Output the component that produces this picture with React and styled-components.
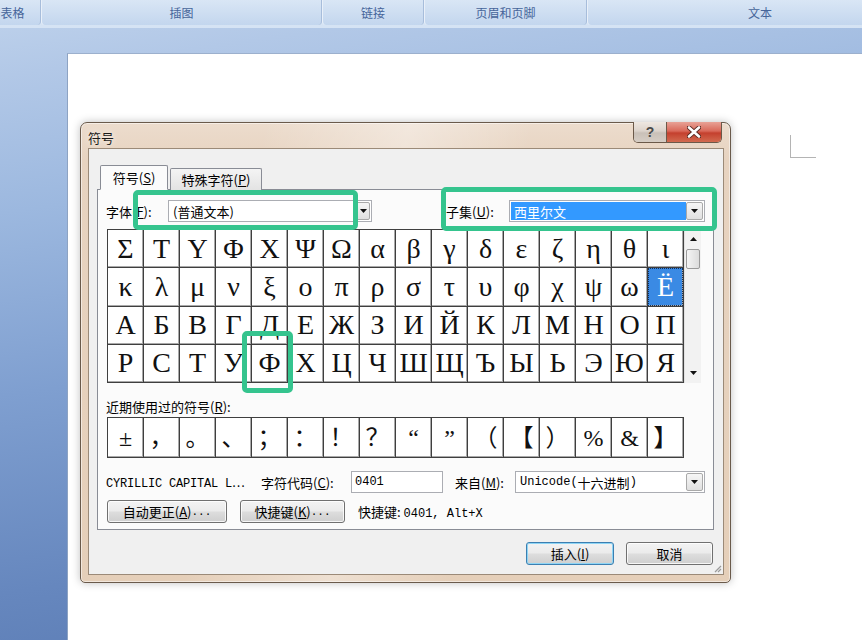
import React from 'react';
import styled, { createGlobalStyle } from 'styled-components';

const CJK = `"Noto Sans CJK SC", "Liberation Sans", sans-serif`;
const MONO = `"Liberation Mono", "Noto Sans CJK SC", monospace`;

const GlobalStyle = createGlobalStyle`
  html, body { margin: 0; padding: 0; }
  body {
    width: 862px;
    height: 640px;
    overflow: hidden;
    font-family: ${CJK};
    font-size: 13px;
    color: #000;
  }
  * { box-sizing: border-box; }
`;

// 배경 / 리본
const Screen = styled.div`
  width: 862px;
  height: 640px;
  display: flex;
  flex-direction: column;
  overflow: hidden;
  background: linear-gradient(172deg, #c0d3ec 0%, #b2c8e7 10%, #9cb8df 28%, #7f9fd0 52%, #6687be 78%, #5677b0 100%);
`;

const Ribbon = styled.div`
  height: 28px;
  flex: none;
  display: flex;
  background: #d5e3f4;
  padding-bottom: 3px;
`;

const Group = styled.div`
  flex: none;
  width: ${p => p.w}px;
  margin-left: ${p => p.ml || 0}px;
  display: flex;
  align-items: center;
  justify-content: center;
  background: linear-gradient(#d9e6f5, #c3d6ee);
  border-right: 1px solid #a7bddb;
  border-left: 1px solid #e9f0f9;
  border-radius: 0 0 4px 4px;
  color: #46659a;
  font-size: 12px;
`;

const Workspace = styled.div`
  flex: 1;
  display: flex;
  padding: 25px 0 0 67px;
`;

const Page = styled.div`
  flex: 1;
  position: relative;
  background: #fff;
  border-left: 1px solid #8da3c3;
  border-top: 1px solid #9cb0cd;
  padding: 68px 0 0 12px;
`;

const CornerMark = styled.div`
  position: absolute;
  left: 722px;
  top: 81px;
  width: 26px;
  height: 23px;
  border-left: 1px solid #b4b4b4;
  border-bottom: 1px solid #b4b4b4;
`;

// 대화상자
const Dialog = styled.div`
  position: relative;
  width: 651px;
  height: 461px;
  display: flex;
  flex-direction: column;
  padding: 0 6px 7px 7px;
  border: 1px solid #6a5a4b;
  border-radius: 7px 7px 5px 5px;
  background:
    linear-gradient(100deg, rgba(255,255,255,0) 25%, rgba(255,255,255,0.35) 45%, rgba(255,255,255,0) 62%),
    linear-gradient(180deg, #ecdccd 0%, #e7d3c0 8%, #e5cfb9 100%);
  box-shadow: 0 0 8px rgba(0,0,0,0.25), inset 0 0 0 1px rgba(255,255,255,0.5);
`;

const TitleBar = styled.div`
  height: 25px;
  flex: none;
  display: flex;
  justify-content: space-between;
  align-items: flex-start;
`;

const Title = styled.div`
  margin-top: 7px;
  line-height: 16px;
  font-size: 13px;
  color: #1a1a1a;
  text-shadow: 0 0 6px rgba(255,255,255,0.9);
`;

const CaptionButtons = styled.div`
  display: flex;
  margin: -1px 2px 0 0;
  border: 1px solid #6b5949;
  border-top: none;
  border-radius: 0 0 5px 5px;
  overflow: hidden;
`;

const CaptionButton = styled.div`
  width: ${p => p.w}px;
  height: 20px;
  display: flex;
  align-items: center;
  justify-content: center;
  background: ${p => p.close
    ? 'linear-gradient(#e8a296 0%, #d9695a 45%, #c4402e 55%, #d26a4f 100%)'
    : 'linear-gradient(#eee7e1 0%, #dcd3cb 45%, #c9c0b8 55%, #d6cdc4 100%)'};
  border-left: ${p => p.close ? '1px solid #6b5949' : 'none'};
  color: #4a4a4a;
  font-family: "Liberation Sans", sans-serif;
  font-size: 14px;
  font-weight: bold;
`;

const Client = styled.div`
  flex: 1;
  position: relative;
  display: flex;
  flex-direction: column;
  background: #f0f0f0;
  border: 1px solid #9b8a78;
  padding: 16px 9px 0 8px;
`;

const TabStrip = styled.div`
  display: flex;
  align-items: flex-end;
  height: 25px;
  padding-left: 3px;
  margin-bottom: -1px;
`;

const Tab = styled.div`
  position: relative;
  z-index: ${p => p.active ? 1 : 0};
  height: ${p => p.active ? 25 : 22}px;
  width: ${p => p.w}px;
  margin-left: ${p => p.ml || 0}px;
  display: flex;
  align-items: center;
  justify-content: center;
  border: 1px solid #898c95;
  border-bottom: ${p => p.active ? '1px solid #fbfbfb' : 'none'};
  border-radius: 2px 2px 0 0;
  background: ${p => p.active ? '#fbfbfb' : 'linear-gradient(#f4f4f4, #e3e3e3)'};
  font-size: 13px;
`;

const Key = styled.span`
  text-decoration: underline;
`;

const Panel = styled.div`
  width: 617px;
  height: 341px;
  flex: none;
  border: 1px solid #898c95;
  background: #fbfbfb;
  padding: 0 0 0 8px;
  display: flex;
  flex-direction: column;
`;

const Row = styled.div`
  display: flex;
  align-items: center;
  height: ${p => p.h || 22}px;
  margin-top: ${p => p.mt || 0}px;
  flex: none;
`;

const Label = styled.div`
  width: ${p => p.w}px;
  margin-left: ${p => p.ml || 0}px;
  flex: none;
  font-size: 13px;
  white-space: nowrap;
`;

const Combo = styled.div`
  width: ${p => p.w}px;
  height: 22px;
  flex: none;
  display: flex;
  border: 1px solid #abadb3;
  background: #fff;
  padding: 1px;
`;

const ComboField = styled.div`
  flex: 1;
  display: flex;
  align-items: center;
  padding: 0 3px;
  background: ${p => p.selected ? '#3399ff' : '#fff'};
  color: ${p => p.selected ? '#fff' : '#000'};
  font-family: ${p => p.mono ? MONO : CJK};
  font-size: ${p => p.mono ? '12px' : '13px'};
  white-space: nowrap;
`;

const ComboButton = styled.div`
  width: ${p => p.w || 17}px;
  display: flex;
  align-items: center;
  justify-content: center;
  border: 1px solid #a9a9a9;
  border-radius: 2px;
  background: linear-gradient(#f6f6f6, #e0e0e0);
`;

const Arrow = ({ up }) => (
  <svg width="7" height="4" viewBox="0 0 7 4">
    <path d={up ? 'M0 4 L3.5 0 L7 4 Z' : 'M0 0 L7 0 L3.5 4 Z'} fill="#111" />
  </svg>
);

const TextBox = styled.div`
  width: ${p => p.w}px;
  height: 22px;
  flex: none;
  display: flex;
  align-items: center;
  padding: 0 3px;
  border: 1px solid #abadb3;
  background: #fff;
  font-family: ${MONO};
  font-size: 12px;
`;

const GridBox = styled.div`
  display: flex;
  margin: 7px 0 0 1px;
  height: 154px;
  flex: none;
`;

const CharGrid = styled.div`
  display: grid;
  grid-template-columns: repeat(16, 35px);
  grid-template-rows: repeat(${p => p.rows}, 1fr);
  gap: 1px;
  width: 577px;
  height: ${p => p.h}px;
  margin-left: ${p => p.ml || 0}px;
  background: #3f3f3f;
  border: 1px solid #3f3f3f;
`;

const Cell = styled.div`
  display: flex;
  align-items: center;
  justify-content: center;
  background: ${p => p.selected ? '#3a8ae4' : '#fff'};
  color: ${p => p.selected ? '#fff' : '#111'};
  outline: ${p => p.selected ? '1px dotted #10305e' : 'none'};
  outline-offset: -1px;
  box-shadow: inset -1px -1px 0 #a9a9a9;
  font-family: "Liberation Serif", "Noto Sans CJK SC", serif;
  font-size: ${p => p.size || 28}px;
  line-height: 1;
  overflow: hidden;
`;

const ScrollBar = styled.div`
  width: 17px;
  display: flex;
  flex-direction: column;
  background: #f2f2f2;
  border-left: 1px solid #e2e2e2;
  padding: 3px 1px;
`;

const ScrollArrow = styled.div`
  height: 14px;
  display: flex;
  align-items: center;
  justify-content: center;
`;

const Thumb = styled.div`
  height: 20px;
  margin-top: 3px;
  border: 1px solid #9a9a9a;
  border-radius: 2px;
  background: linear-gradient(90deg, #f4f4f4, #dcdcdc);
`;

const Spacer = styled.div`
  flex: 1;
`;

const SmallText = styled.div`
  width: ${p => p.w}px;
  flex: none;
  font-family: ${MONO};
  font-size: 12px;
  letter-spacing: -0.2px;
  white-space: nowrap;
`;

const StatusText = styled.div`
  margin-left: 13px;
  font-size: 13px;
  white-space: nowrap;
  span {
    font-family: ${MONO};
    font-size: 12px;
  }
`;

const Button = styled.div`
  width: ${p => p.w}px;
  height: 23px;
  margin-left: ${p => p.ml || 0}px;
  flex: none;
  display: flex;
  align-items: center;
  justify-content: center;
  border: 1px solid ${p => p.primary ? '#3c7fb1' : '#707070'};
  border-radius: 3px;
  background: linear-gradient(#f3f3f3 0%, #ebebeb 48%, #dddddd 52%, #cfcfcf 100%);
  box-shadow: inset 0 0 0 1px ${p => p.primary ? '#8ed5f5' : 'rgba(255,255,255,0.8)'};
  font-size: 13px;
  white-space: nowrap;
  span.mono {
    font-family: ${MONO};
    font-size: 11px;
  }
`;

const Footer = styled.div`
  display: flex;
  justify-content: flex-end;
  gap: 12px;
  margin-top: 12px;
  padding-right: 1px;
`;

const Grip = styled.div`
  position: absolute;
  right: 1px;
  bottom: 1px;
  line-height: 0;
`;

const Highlight = styled.div`
  position: absolute;
  left: ${p => p.x}px;
  top: ${p => p.y}px;
  width: ${p => p.w}px;
  height: ${p => p.h}px;
  border: 5px solid #35c48e;
  border-radius: 5px;
  pointer-events: none;
`;

const symbolRows = [
  ['Σ', 'Τ', 'Υ', 'Φ', 'Χ', 'Ψ', 'Ω', 'α', 'β', 'γ', 'δ', 'ε', 'ζ', 'η', 'θ', 'ι'],
  ['κ', 'λ', 'μ', 'ν', 'ξ', 'ο', 'π', 'ρ', 'σ', 'τ', 'υ', 'φ', 'χ', 'ψ', 'ω', 'Ё'],
  ['А', 'Б', 'В', 'Г', 'Д', 'Е', 'Ж', 'З', 'И', 'Й', 'К', 'Л', 'М', 'Н', 'О', 'П'],
  ['Р', 'С', 'Т', 'У', 'Ф', 'Х', 'Ц', 'Ч', 'Ш', 'Щ', 'Ъ', 'Ы', 'Ь', 'Э', 'Ю', 'Я'],
];

const recentSymbols = ['±', '，', '。', '、', '；', '：', '！', '？', '“', '”', '（', '【', '）', '%', '&', '】'];

const ribbonGroups = [
  { label: '表格', w: 57, ml: -16 },
  { label: '插图', w: 281 },
  { label: '链接', w: 102 },
  { label: '页眉和页脚', w: 163 },
  { label: '文本', w: 346 },
];

export default function App() {
  return (
    <Screen>
      <GlobalStyle />
      <Ribbon>
        {ribbonGroups.map(g => (
          <Group key={g.label} w={g.w} ml={g.ml}>{g.label}</Group>
        ))}
      </Ribbon>

      <Workspace>
        <Page>
          <CornerMark />

          <Dialog>
            <TitleBar>
              <Title>符号</Title>
              <CaptionButtons>
                <CaptionButton w={32}>?</CaptionButton>
                <CaptionButton w={55} close>
                  <svg width="14" height="12" viewBox="0 0 14 12">
                    <path d="M2 1.5 L12 10.5 M12 1.5 L2 10.5" stroke="#5a2a22" strokeWidth="4.4" strokeLinecap="round" />
                    <path d="M2 1.5 L12 10.5 M12 1.5 L2 10.5" stroke="#fff" strokeWidth="2.6" strokeLinecap="round" />
                  </svg>
                </CaptionButton>
              </CaptionButtons>
            </TitleBar>

            <Client>
              <TabStrip>
                <Tab active w={68}>符号(<Key>S</Key>)</Tab>
                <Tab w={92} ml={2}>特殊字符(<Key>P</Key>)</Tab>
              </TabStrip>

              <Panel>
                <Row mt={10}>
                  <Label w={62}>字体(<Key>F</Key>):</Label>
                  <Combo w={204}>
                    <ComboField>(普通文本)</ComboField>
                    <ComboButton w={14}><Arrow /></ComboButton>
                  </Combo>
                  <Label w={63} ml={74}>子集(<Key>U</Key>):</Label>
                  <Combo w={196}>
                    <ComboField selected>西里尔文</ComboField>
                    <ComboButton><Arrow /></ComboButton>
                  </Combo>
                </Row>

                <GridBox>
                  <CharGrid rows={4} h={154}>
                    {symbolRows.flat().map((ch, i) => (
                      <Cell key={i} selected={ch === 'Ё'}>{ch}</Cell>
                    ))}
                  </CharGrid>
                  <ScrollBar>
                    <ScrollArrow><Arrow up /></ScrollArrow>
                    <Thumb />
                    <Spacer />
                    <ScrollArrow><Arrow /></ScrollArrow>
                  </ScrollBar>
                </GridBox>

                <Row h={16} mt={15}>
                  <Label w={200}>近期使用过的符号(<Key>R</Key>):</Label>
                </Row>
                <Row h={41} mt={3}>
                  <CharGrid rows={1} h={41} ml={1}>
                    {recentSymbols.map((ch, i) => (
                      <Cell key={i} size={24}>{ch}</Cell>
                    ))}
                  </CharGrid>
                </Row>

                <Row mt={13}>
                  <SmallText w={155}>CYRILLIC CAPITAL L⋯</SmallText>
                  <Label w={90}>字符代码(<Key>C</Key>):</Label>
                  <TextBox w={92}>0401</TextBox>
                  <Label w={60} ml={12}>来自(<Key>M</Key>):</Label>
                  <Combo w={190}>
                    <ComboField mono>Unicode(<span style={{ fontFamily: CJK, fontSize: 13 }}>十六进制</span>)</ComboField>
                    <ComboButton><Arrow /></ComboButton>
                  </Combo>
                </Row>

                <Row h={23} mt={7}>
                  <Button w={120} ml={1}>自动更正(<Key>A</Key>)<span className="mono">...</span></Button>
                  <Button w={105} ml={13}>快捷键(<Key>K</Key>)<span className="mono">...</span></Button>
                  <StatusText>快捷键: <span>0401, Alt+X</span></StatusText>
                </Row>
              </Panel>

              <Footer>
                <Button w={88} primary>插入(<Key>I</Key>)</Button>
                <Button w={87}>取消</Button>
              </Footer>

              <Grip>
                <svg width="9" height="9" viewBox="0 0 9 9">
                  <path d="M8 2 L2 8 M8 5 L5 8" stroke="#9a9a9a" strokeWidth="1.2" />
                </svg>
              </Grip>
            </Client>

            <Highlight x={52} y={67} w={225} h={40} />
            <Highlight x={360} y={64} w={276} h={44} />
            <Highlight x={161} y={208} w={51} h={62} />
          </Dialog>
        </Page>
      </Workspace>
    </Screen>
  );
}
